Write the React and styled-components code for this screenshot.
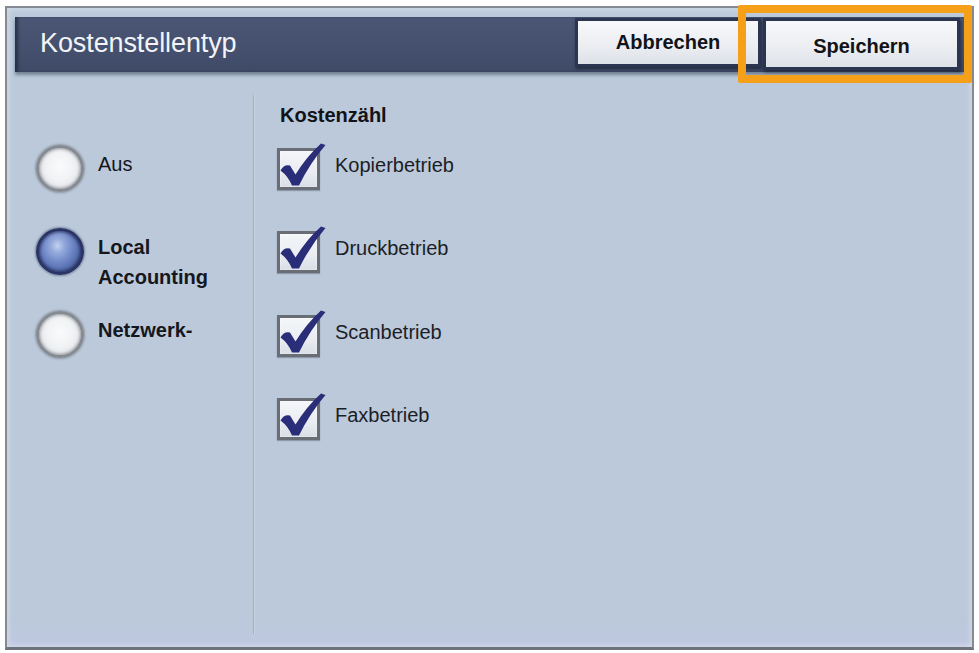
import React from "react";
import styled, { createGlobalStyle } from "styled-components";

const Global = createGlobalStyle`
  html, body { margin: 0; padding: 0; background: #ffffff; }
  body { font-family: "Liberation Sans", Arial, sans-serif; }
  * { box-sizing: border-box; }
`;

const Page = styled.div`
  width: 979px;
  height: 653px;
  padding: 6px 5px 3px 5px;
`;

const Frame = styled.div`
  position: relative;
  width: 969px;
  height: 644px;
  border: 2px solid #858a92;
  border-bottom-width: 3px;
  border-bottom-color: #6e737b;
  background: linear-gradient(to bottom, #bbc9da 0%, #bbc9da 95%, #bec7e0 100%);
  box-shadow: inset 0 0 5px 2px rgba(225, 232, 240, 0.55);
  display: flex;
  flex-direction: column;
  padding: 9px 7px 0 8px;
`;

const Header = styled.div`
  height: 55px;
  flex: none;
  display: flex;
  align-items: flex-start;
  padding: 1px 5px 0 25px;
  background: linear-gradient(to bottom, #4a5674 0%, #44506d 60%, #3f4a67 100%);
  box-shadow: inset 4px 0 3px -1px rgba(20, 26, 44, 0.55), 0 3px 3px rgba(60, 72, 95, 0.55);
`;

const Title = styled.h1`
  margin: 0;
  align-self: center;
  padding-bottom: 4px;
  font-size: 27px;
  font-weight: 400;
  color: #f2f4f8;
  letter-spacing: -0.1px;
  flex: 1;
`;

const Buttons = styled.div`
  display: flex;
  align-items: flex-start;
  gap: 2px;
`;

const Button = styled.button`
  width: ${(p) => p.$w}px;
  height: ${(p) => p.$h}px;
  border: 3px solid #2c3550;
  background: linear-gradient(to bottom, #f7f8fa 0%, #eceef2 55%, #dde1e8 100%);
  box-shadow: 1px 2px 3px rgba(15, 20, 35, 0.6);
  font-family: "Liberation Sans", Arial, sans-serif;
  font-weight: 700;
  font-size: 20px;
  color: #111318;
  padding: ${(p) => p.$pt || 0}px 0 0 0;
  cursor: pointer;
`;

const Highlight = styled.div`
  position: relative;
`;

const HighlightRing = styled.div`
  position: absolute;
  top: -13px;
  left: -25px;
  right: -12px;
  bottom: -13px;
  border: 8px solid #f6a019;
  border-radius: 2px;
  pointer-events: none;
`;

const Body = styled.div`
  flex: 1;
  display: flex;
  margin-left: -8px;
  margin-right: -7px;
  padding: 23px 0 13px 0;
`;

const LeftCol = styled.div`
  width: 247px;
  flex: none;
  border-right: 1px solid #a2afc0;
  box-shadow: 1px 0 0 #c9d3df;
  padding: 50px 0 0 29px;
  display: flex;
  flex-direction: column;
`;

const RadioRow = styled.label`
  height: 83px;
  display: flex;
  align-items: flex-start;
  gap: 14px;
`;

const Radio = styled.span`
  width: 48px;
  height: 47px;
  flex: none;
  border-radius: 50%;
  border: 3px solid ${(p) => (p.$on ? "#2b3565" : "#868a91")};
  background: ${(p) =>
    p.$on
      ? "radial-gradient(ellipse at 44% 36%, #c4d2ef 0%, #94a9dc 20%, #6f87c6 45%, #5068a8 70%, #3a4884 100%)"
      : "radial-gradient(ellipse at 50% 45%, #fbfbfc 0%, #f0f2f4 45%, #e3e6ea 75%, #c9cdd3 100%)"};
  box-shadow: ${(p) =>
    p.$on
      ? "inset 0 0 3px 1px rgba(25, 32, 70, 0.7), 0 0 2px 1px rgba(40, 50, 90, 0.45)"
      : "inset 0 0 3px 1px rgba(80, 85, 95, 0.55), 0 0 2px 1px rgba(90, 95, 105, 0.45)"};
`;

const RadioLabel = styled.span`
  padding-top: 4px;
  font-size: 20px;
  line-height: 30px;
  font-weight: ${(p) => (p.$bold ? 700 : 400)};
  color: #15171c;
`;

const RightCol = styled.div`
  flex: 1;
  padding: 5px 0 0 23px;
  display: flex;
  flex-direction: column;
`;

const SectionTitle = styled.h2`
  margin: 0 0 18px 3px;
  font-size: 20px;
  line-height: 30px;
  font-weight: 700;
  color: #111318;
`;

const CheckRow = styled.label`
  height: 83.4px;
  display: flex;
  align-items: flex-start;
  gap: 15px;
`;

const Box = styled.span`
  position: relative;
  width: 43px;
  height: 42px;
  flex: none;
  border: 3px solid #686d76;
  background: linear-gradient(to bottom, #f4f6f9 0%, #e9ecf1 60%, #d9dee6 100%);
  box-shadow: inset 0 0 2px rgba(255, 255, 255, 0.8), 0 1px 1px rgba(60, 66, 80, 0.35);
`;

const Check = styled.svg`
  position: absolute;
  left: -3px;
  top: -11px;
  width: 52px;
  height: 52px;
  overflow: visible;
`;

const CheckLabel = styled.span`
  padding-top: 2px;
  font-size: 20px;
  line-height: 30px;
  color: #1b1e26;
`;

const CheckMark = () => (
  <Check viewBox="0 -8 52 52">
    <path
      d="M3.5 22.5 Q7 16 13 17.5 L18.5 26.5 Q30 8 44 -4.5 L48.5 -3 Q33 15 22 37.5 L15 37.5 Q11 28 3.5 22.5 Z"
      fill="#2a2e78"
    />
  </Check>
);

const radios = [
  { label: ["Aus"], on: false, bold: false },
  { label: ["Local", "Accounting"], on: true, bold: true },
  { label: ["Netzwerk-"], on: false, bold: true },
];

const checks = ["Kopierbetrieb", "Druckbetrieb", "Scanbetrieb", "Faxbetrieb"];

export default function App() {
  return (
    <>
      <Global />
      <Page>
        <Frame>
          <Header>
            <Title>Kostenstellentyp</Title>
            <Buttons>
              <Button $w={186} $h={49}>Abbrechen</Button>
              <Highlight>
                <Button $w={197} $h={52} $pt={5}>Speichern</Button>
                <HighlightRing />
              </Highlight>
            </Buttons>
          </Header>
          <Body>
            <LeftCol>
              {radios.map((r, i) => (
                <RadioRow key={i}>
                  <Radio $on={r.on} />
                  <RadioLabel $bold={r.bold}>
                    {r.label.map((l, j) => (
                      <React.Fragment key={j}>
                        {j > 0 && <br />}
                        {l}
                      </React.Fragment>
                    ))}
                  </RadioLabel>
                </RadioRow>
              ))}
            </LeftCol>
            <RightCol>
              <SectionTitle>Kostenzähl</SectionTitle>
              {checks.map((c) => (
                <CheckRow key={c}>
                  <Box>
                    <CheckMark />
                  </Box>
                  <CheckLabel>{c}</CheckLabel>
                </CheckRow>
              ))}
            </RightCol>
          </Body>
        </Frame>
      </Page>
    </>
  );
}
